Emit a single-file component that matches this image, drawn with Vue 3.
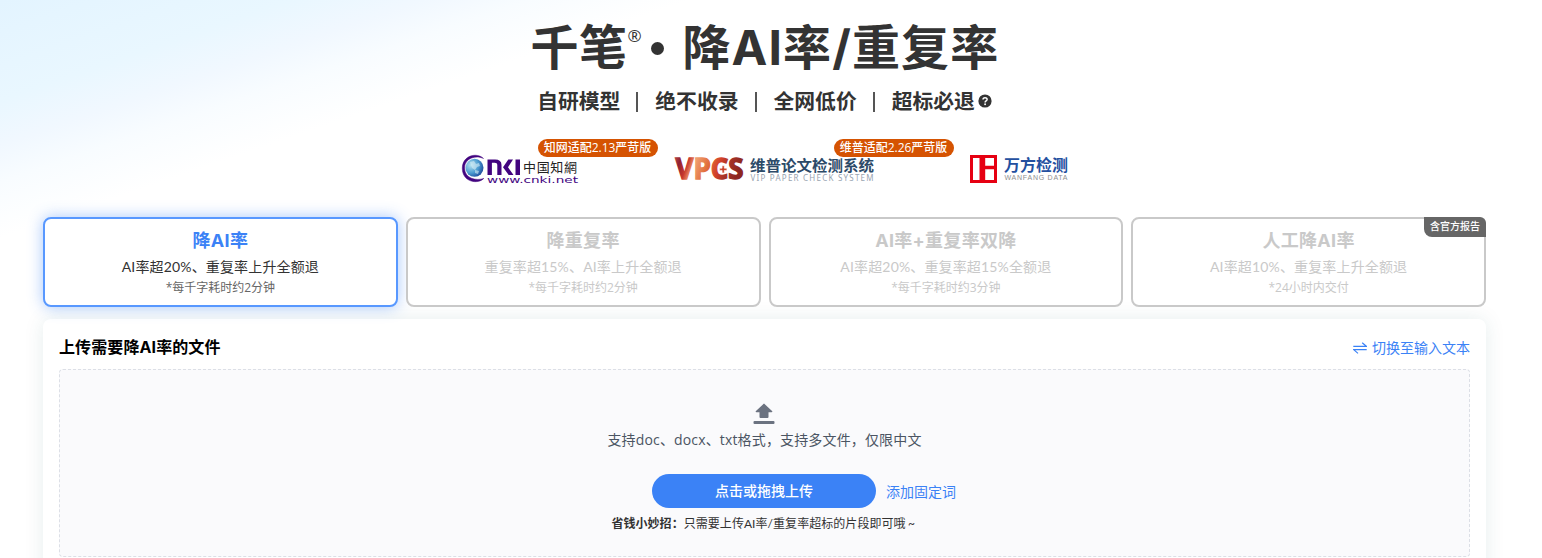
<script setup>
const slogans = ['自研模型', '绝不收录', '全网低价', '超标必退']

const plans = [
  { title: '降AI率', desc: 'AI率超20%、重复率上升全额退', note: '*每千字耗时约2分钟', active: true },
  { title: '降重复率', desc: '重复率超15%、AI率上升全额退', note: '*每千字耗时约2分钟' },
  { title: 'AI率+重复率双降', desc: 'AI率超20%、重复率超15%全额退', note: '*每千字耗时约3分钟' },
  { title: '人工降AI率', desc: 'AI率超10%、重复率上升全额退', note: '*24小时内交付', tag: '含官方报告' },
]
</script>

<template>
  <div class="page">
    <header class="hero">
      <h1 class="title">
        <span class="brand">千笔</span><span class="reg">®</span><span class="dot"></span><span class="service">降AI率/重复率</span>
      </h1>
      <div class="slogans">
        <template v-for="(s, i) in slogans" :key="s">
          <i v-if="i" class="bar"></i>
          <span>{{ s }}</span>
        </template>
        <svg class="help" viewBox="0 0 14 14">
          <circle cx="7" cy="7" r="6.6" fill="#333" />
          <path d="M5 5.6C5 3.1 9.1 3.1 9.1 5.5C9.1 7 7.1 6.9 7.1 8.4" fill="none" stroke="#fff" stroke-width="1.5" />
          <circle cx="7.1" cy="10.3" r="0.95" fill="#fff" />
        </svg>
      </div>
      <div class="partners">
        <div class="partner cnki">
          <svg width="118" height="36" viewBox="0 0 118 36">
            <defs>
              <radialGradient id="globe" cx="0.3" cy="0.35" r="0.8">
                <stop offset="0" stop-color="#b5e2f0" />
                <stop offset="0.55" stop-color="#4a9bd0" />
                <stop offset="1" stop-color="#173f95" />
              </radialGradient>
            </defs>
            <circle cx="12.5" cy="13.8" r="9" fill="url(#globe)" />
            <path d="M8 8l4-1 2 3 3-1 1 3-3 1-2 3-3-2zM13 16l4 1-1 3-3-1z" fill="#d5edf5" opacity=".6" />
            <path d="M21.5 4.5C15 -2 0.3 1.3 0.3 14.3C0.3 28.3 16 30.6 21.8 24.4C15 27 2.6 25 2.6 14C2.6 3.4 15 1 21.5 4.5Z" fill="#42047f" stroke="#42047f" stroke-width=".5" />
            <path d="M25.5 21V5.5H32Q39.5 5 39.5 11V21H35.3V11.2Q35.3 8.8 32.6 8.8H29.9V21ZM51 5.5L46 13.2L51.5 21H46.7L41 13.2L46.3 5.5ZM53.5 5.5H58V21H53.5Z" fill="#42047f" />
            <text x="61" y="17.5" class="brush" textLength="54" lengthAdjust="spacing">中国知網</text>
            <text x="25" y="29" class="cnki-url" textLength="91" lengthAdjust="spacingAndGlyphs">www.cnki.net</text>
          </svg>
          <span class="badge">知网适配2.13严苛版</span>
        </div>
        <div class="partner vip">
          <svg width="202" height="36" viewBox="0 0 202 36">
            <defs>
              <linearGradient id="vpcs" x1="0" y1="0" x2="1" y2="0.2">
                <stop offset="0" stop-color="#c5544a" />
                <stop offset="0.12" stop-color="#8f2030" />
                <stop offset="0.24" stop-color="#c8382e" />
                <stop offset="0.34" stop-color="#f0a070" />
                <stop offset="0.55" stop-color="#e06a38" />
                <stop offset="0.7" stop-color="#d2402a" />
                <stop offset="0.82" stop-color="#a83428" />
                <stop offset="1" stop-color="#8d2620" />
              </linearGradient>
            </defs>
            <text x="0.5" y="25.3" class="vpcs" fill="url(#vpcs)" stroke="url(#vpcs)" textLength="68" lengthAdjust="spacingAndGlyphs">VPCS</text>
            <path d="M44.6 14.2h2.5v-2.5h2.2v2.5h2.6v2.2h-2.6v2.6h-2.2v-2.6h-2.5z" fill="#ca3f25" stroke="#fff" stroke-width=".6" />
            <text x="75" y="16.5" class="vip-name" textLength="124" lengthAdjust="spacingAndGlyphs">维普论文检测系统</text>
            <text x="75.5" y="26.8" class="vip-en" textLength="123" lengthAdjust="spacing">VIP PAPER CHECK SYSTEM</text>
          </svg>
          <span class="badge">维普适配2.26严苛版</span>
        </div>
        <div class="partner wanfang">
          <svg width="98" height="36" viewBox="0 0 98 36">
            <path fill-rule="evenodd" d="M0 1H27V29H0ZM3 4V26H9.5V4ZM15.2 4V11.8H24V4ZM15.2 15.2V26H24V15.2Z" fill="#e60012" />
            <text x="34" y="17" class="wf-name" textLength="64" lengthAdjust="spacingAndGlyphs">万方检测</text>
            <text x="34.5" y="26" class="wf-en" textLength="63" lengthAdjust="spacing">WANFANG DATA</text>
          </svg>
        </div>
      </div>
    </header>

    <main class="content">
      <div class="plans">
        <div v-for="p in plans" :key="p.title" class="plan" :class="{ active: p.active }">
          <div class="plan-title">{{ p.title }}</div>
          <div class="plan-desc">{{ p.desc }}</div>
          <div class="plan-note">{{ p.note }}</div>
          <span v-if="p.tag" class="plan-tag">{{ p.tag }}</span>
        </div>
      </div>

      <section class="panel">
        <div class="panel-head">
          <h2>上传需要降AI率的文件</h2>
          <a class="switch">
            <svg width="14" height="12" viewBox="0 0 14 12" fill="none" stroke="#3b82f6" stroke-width="1.2">
              <path d="M0.3 4.4H13.4L9.2 0.8M13.7 7.6H0.6L5 11.4" />
            </svg>
            <span>切换至输入文本</span>
          </a>
        </div>
        <div class="dropzone">
          <svg class="upload" width="22" height="22" viewBox="0 0 22 22" fill="#6b7280">
            <path d="M11 .4 19.3 8.2Q19.6 9.2 18.5 9.2H15.5V14Q15.5 15 14.5 15H7.5Q6.5 15 6.5 14V9.2H3.5Q2.4 9.2 2.7 8.2Z" />
            <rect x="0.5" y="18" width="21" height="3" rx="1" />
          </svg>
          <p class="formats">支持doc、docx、txt格式，支持多文件，仅限中文</p>
          <div class="actions">
            <button class="upload-btn">点击或拖拽上传</button>
            <a class="fixed-words">添加固定词</a>
          </div>
          <p class="tip"><b>省钱小妙招：</b>只需要上传AI率/重复率超标的片段即可哦<span class="tilde">~</span></p>
        </div>
      </section>
    </main>
  </div>
</template>

<style>
body {
  margin: 0;
  overflow: hidden;
}
</style>

<style scoped>
.page {
  box-sizing: border-box;
  width: 1542px;
  height: 558px;
  padding: 0 56px 0 43px;
  overflow: hidden;
  color: #333;
  font-family: "Open Sans", "Noto Sans CJK SC", sans-serif;
  background:
    linear-gradient(161deg, #e3f4ff 0, #e9f7ff 95px, #f1f8ff 138px, #f8fcff 172px, #fff 225px);
}
.hero {
  height: 217px;
  display: flex;
  flex-direction: column;
  align-items: center;
}
.title {
  height: 69px;
  margin: 13px 0 0;
  display: flex;
  align-items: flex-start;
  font-family: Inter, "Noto Sans CJK SC", sans-serif;
  font-size: 48px;
  line-height: 70px;
  font-weight: 700;
  white-space: nowrap;
}
.brand {
  width: 97px;
  letter-spacing: 0.5px;
}
.reg {
  width: 14px;
  margin-top: 13px;
  font-family: "Open Sans", sans-serif;
  font-size: 17px;
  line-height: 20px;
  font-weight: 400;
}
.dot {
  width: 13px;
  height: 13px;
  margin: 29px 19px 0 9px;
  border-radius: 50%;
  background: #333;
}
.service {
  width: 316px;
  letter-spacing: 1.1px;
}
.slogans {
  height: 30px;
  margin-top: 4px;
  display: flex;
  align-items: center;
  font-size: 20.8px;
  line-height: 30px;
  font-weight: 700;
  white-space: nowrap;
}
.bar {
  width: 2px;
  height: 20px;
  margin: 2px 17px 0 16px;
  background: #555;
}
.help {
  width: 14px;
  height: 14px;
  margin-left: 3px;
}
.partners {
  width: 606px;
  height: 32px;
  margin-top: 38px;
  display: flex;
}
.partner {
  position: relative;
  flex: none;
  height: 32px;
}
.partner svg {
  display: block;
  overflow: visible;
}
.cnki {
  width: 213px;
}
.vip {
  width: 295px;
}
.badge {
  position: absolute;
  top: -15px;
  left: 76px;
  box-sizing: border-box;
  width: 120px;
  height: 18px;
  border-radius: 9px;
  background: #d55302;
  color: #fff;
  font-size: 12px;
  line-height: 18px;
  font-weight: 500;
  text-align: center;
  white-space: nowrap;
}
.vip .badge {
  left: 159px;
}
.brush {
  font: 400 13px/1 "Noto Sans CJK TC", serif;
  fill: #222;
}
.cnki-url {
  font: 9px/1 "DejaVu Sans", sans-serif;
  fill: #42047f;
}
.vpcs {
  font: 700 28px/1 "Open Sans", sans-serif;
  stroke-width: 1.4;
}
.vip-name {
  font: 700 15px/1 "Noto Sans CJK SC", sans-serif;
  fill: #2c4a68;
}
.vip-en {
  font: 8px/1 "Noto Sans", sans-serif;
  fill: #98a3b0;
}
.wf-name {
  font: 700 16px/1 "Noto Sans CJK SC", sans-serif;
  fill: #24509f;
}
.wf-en {
  font: 400 7px/1 "Liberation Sans", sans-serif;
  fill: #8f8f8f;
}
.plans {
  display: grid;
  grid-template-columns: repeat(4, 1fr);
  gap: 8px;
}
.plan {
  position: relative;
  box-sizing: border-box;
  height: 90px;
  padding-top: 8px;
  border: 2px solid #c9c9c9;
  border-radius: 8px;
  background: #fff;
  color: #c9c9c9;
  text-align: center;
  white-space: nowrap;
}
.plan.active {
  border-color: #5898ff;
  box-shadow: 0 0 15px rgba(59, 130, 246, 0.45);
  color: #333;
}
.plan-title {
  height: 28px;
  font-family: Inter, "Noto Sans CJK SC", sans-serif;
  font-size: 18px;
  line-height: 28px;
  font-weight: 700;
  letter-spacing: 0.3px;
}
.active .plan-title {
  color: #3b82f6;
}
.plan-desc {
  height: 24px;
  font-family: Lato, "Noto Sans CJK SC", sans-serif;
  font-size: 14px;
  line-height: 24px;
  letter-spacing: 0.15px;
}
.plan-note {
  height: 16px;
  font-size: 12px;
  line-height: 17px;
}
.active .plan-note {
  color: #666;
}
.plan-tag {
  position: absolute;
  top: -2px;
  right: -2px;
  width: 62px;
  height: 20px;
  border-radius: 0 6px 0 8px;
  background: #666;
  color: #fff;
  font-size: 10px;
  line-height: 19px;
  font-weight: 500;
}
.panel {
  box-sizing: border-box;
  height: 300px;
  margin-top: 12px;
  padding: 0 16px;
  border-radius: 8px;
  background: #fff;
  box-shadow: 0 0 20px rgba(5, 90, 90, 0.1);
}
.panel-head {
  height: 50px;
  display: flex;
  align-items: center;
  justify-content: space-between;
}
.panel-head h2 {
  margin: 6px 0 0;
  color: #000;
  font-family: Inter, "Noto Sans CJK SC", sans-serif;
  font-size: 16px;
  line-height: 24px;
  font-weight: 700;
  letter-spacing: 0.1px;
}
.switch {
  margin-top: 8px;
  display: flex;
  align-items: center;
  gap: 5px;
  color: #3b82f6;
  font-size: 14px;
  line-height: 20px;
}
.dropzone {
  box-sizing: border-box;
  height: 188px;
  padding: 33px 1px 0 0;
  display: flex;
  flex-direction: column;
  align-items: center;
  border: 1px dashed #dcdfe6;
  border-radius: 4px;
  background: #fafafc;
}
.upload {
  display: block;
}
.formats {
  margin: 5px -1px 0 0;
  color: #4b5563;
  font-size: 14px;
  line-height: 20px;
  letter-spacing: 0.15px;
}
.actions {
  height: 34px;
  margin-top: 24px;
  margin-left: 80px;
  display: flex;
  align-items: center;
  gap: 10px;
}
.upload-btn {
  width: 224px;
  height: 34px;
  padding: 0;
  border: 0;
  border-radius: 17px;
  background: #3b82f6;
  color: #fff;
  font: 500 14px/34px "Open Sans", "Noto Sans CJK SC", sans-serif;
}
.fixed-words {
  margin-top: 2px;
  color: #3b82f6;
  font-size: 14px;
  line-height: 20px;
}
.tip {
  margin: 7px -1px 0 0;
  font-family: Lato, "Noto Sans CJK SC", sans-serif;
  font-size: 12px;
  line-height: 18px;
  letter-spacing: 0.05px;
}
.tilde {
  display: inline-block;
  width: 12px;
  text-align: center;
}
</style>
